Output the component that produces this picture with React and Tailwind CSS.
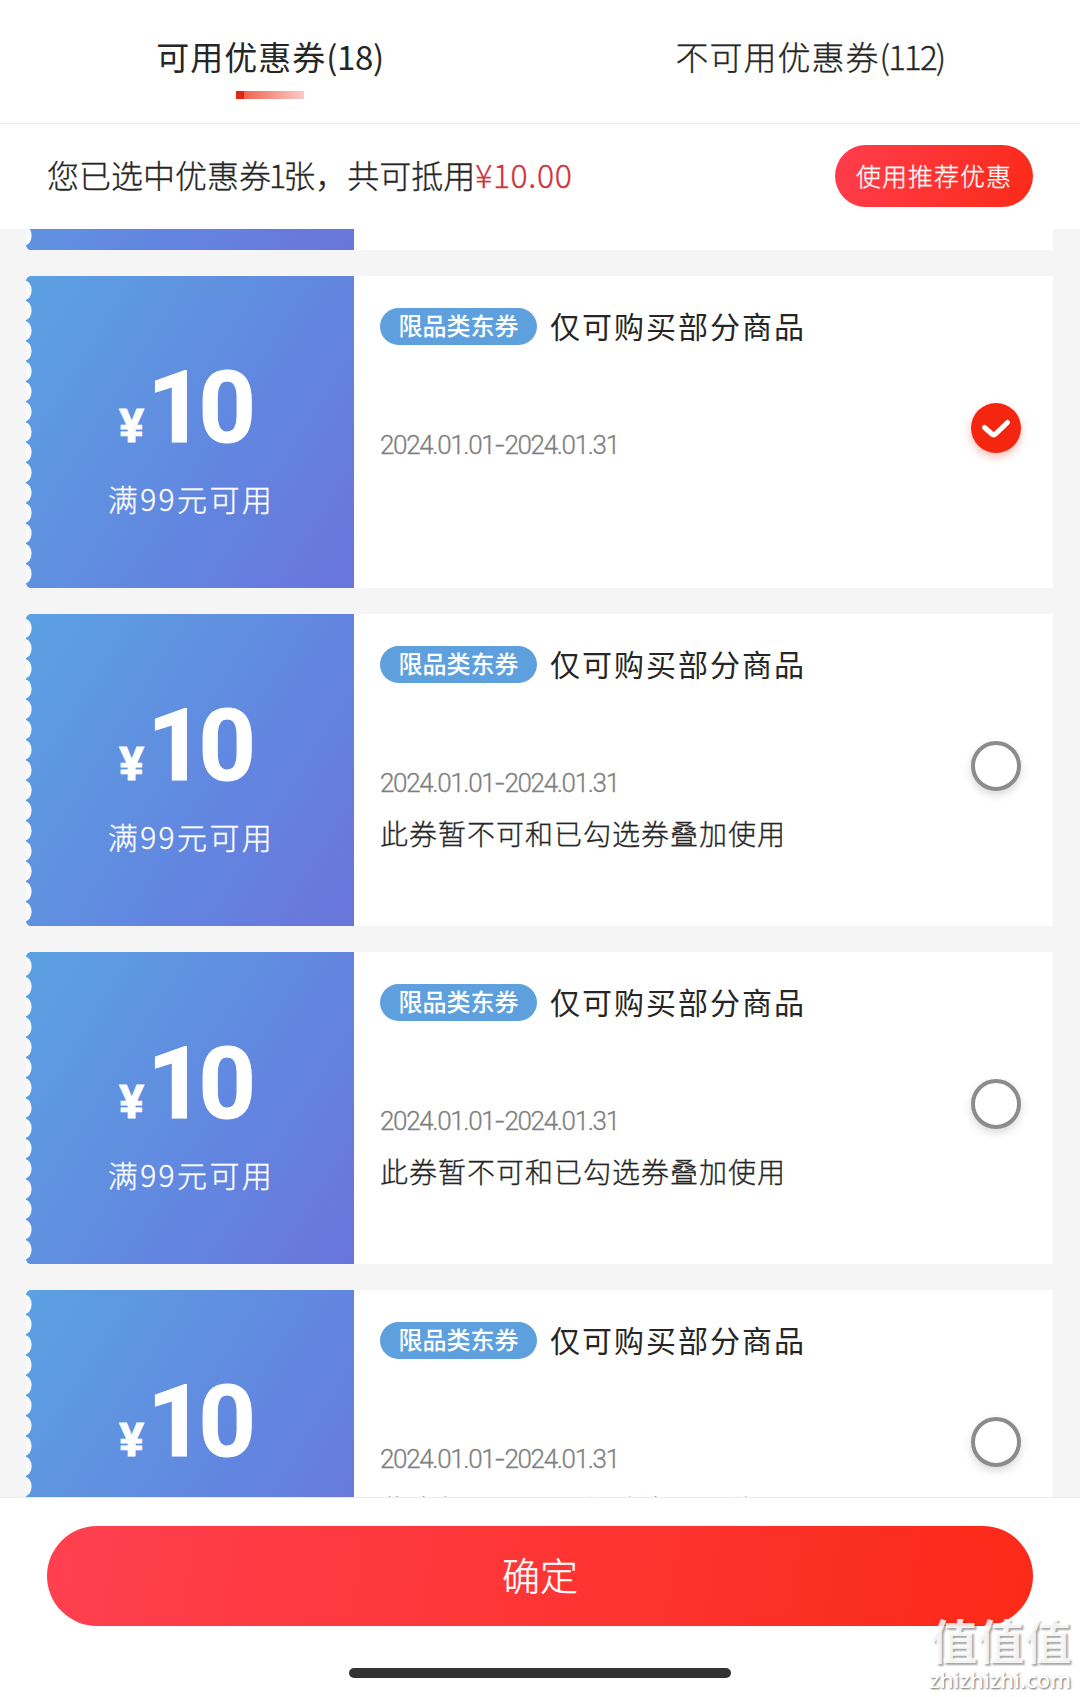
import React, { useState } from "react";

const coupons = [
  { id: 1, amount: 10, limit: "满99元可用", tag: "限品类东券", title: "仅可购买部分商品", date: "2024.01.01-2024.01.31", note: "" },
  { id: 2, amount: 10, limit: "满99元可用", tag: "限品类东券", title: "仅可购买部分商品", date: "2024.01.01-2024.01.31", note: "此券暂不可和已勾选券叠加使用" },
  { id: 3, amount: 10, limit: "满99元可用", tag: "限品类东券", title: "仅可购买部分商品", date: "2024.01.01-2024.01.31", note: "此券暂不可和已勾选券叠加使用" },
  { id: 4, amount: 10, limit: "满99元可用", tag: "限品类东券", title: "仅可购买部分商品", date: "2024.01.01-2024.01.31", note: "此券暂不可和已勾选券叠加使用" },
];

const notches = Array.from({ length: 15 }, (_, i) => 14.2 + i * 20.25);

// Perforated left edge of a coupon
function Perforation() {
  return (
    <svg className="absolute left-0 top-0" width="8" height="312" viewBox="0 0 8 312">
      <path d="M0 0H4Q1 1 0 4ZM0 312H4Q1 311 0 308Z" fill="#f5f5f5" />
      {notches.map((y) => (
        <ellipse key={y} cx="-1" cy={y} rx="6.6" ry="9.6" fill="#f8f9fb" />
      ))}
    </svg>
  );
}

function Stub({ children }) {
  return (
    <div className="relative flex h-[312px] w-[328px] shrink-0 flex-col items-center bg-linear-[122deg,#5ba1e2_0%,#6090e0_40%,#6285e0_62%,#6a75da_100%] text-white">
      <Perforation />
      {children}
    </div>
  );
}

function Radio({ checked, onClick }) {
  if (checked) {
    return (
      <button onClick={onClick} className="flex size-[50px] items-center justify-center rounded-full bg-[#f5260f] shadow-[0_4px_8px_rgba(245,38,15,0.3)]">
        <svg width="32" height="24" viewBox="0 0 32 24" fill="none">
          <path d="M4.5 11.5L12.5 18.5Q14 19.5 15.5 18L27.5 6.5" stroke="#fff" strokeWidth="5" strokeLinecap="round" strokeLinejoin="round" />
        </svg>
      </button>
    );
  }
  return (
    <button onClick={onClick} className="size-[50px] rounded-full border-4 border-[#8c8c8c] bg-white shadow-[0_4px_8px_rgba(0,0,0,0.15)]" />
  );
}

function Coupon({ item, checked, onSelect }) {
  const [from, to] = item.date.split("-");

  return (
    <div className="flex h-[312px] shrink-0 bg-white">
      <Stub>
        <div className="mt-[78px] flex h-[108px] items-baseline pr-[11px] font-[Roboto] font-bold">
          <span className="text-[47px] leading-[56px] [-webkit-text-stroke:0.8px]">¥</span>
          <span className="ml-[3px] text-[100px] leading-[108px] tracking-[-6px] [-webkit-text-stroke:1px]">{item.amount}</span>
        </div>
        <div className="mt-[14px] pl-[2px] text-[30px] leading-[44px] font-light tracking-[2.4px] [-webkit-text-stroke:0.3px]">{item.limit}</div>
      </Stub>
      <div className="flex flex-1 justify-between pl-[26px] pr-[32px]">
        <div className="flex flex-col">
          <div className="mt-[28px] flex h-[44px] items-center">
            <span className="flex h-[37px] w-[157px] items-center justify-center rounded-full bg-[#5ea0de] pb-[3px] text-[24px] leading-[34px] font-medium text-white">{item.tag}</span>
            <span className="ml-[13px] pb-[2px] text-[30px] leading-[42px] tracking-[2px] text-[#262626]">{item.title}</span>
          </div>
          <div className="mt-[81px] font-[Roboto] text-[26px] leading-[32px] font-light tracking-[-1.35px] text-[#808080] [-webkit-text-stroke:0.3px]">
            {from}
            <span className="mx-[2px] inline-block scale-x-130">-</span>
            {to}
          </div>
          {item.note && <div className="mt-[12px] text-[28px] leading-[44px] font-light tracking-[1px] text-[#262626] [-webkit-text-stroke:0.3px]">{item.note}</div>}
        </div>
        <div className="mt-[127px]">
          <Radio checked={checked} onClick={onSelect} />
        </div>
      </div>
    </div>
  );
}

export default function App() {
  const [selected, setSelected] = useState(1);

  return (
    <div className="relative flex h-[1697px] w-[1080px] flex-col overflow-hidden bg-[#f5f5f5] font-['Noto_Sans_CJK_SC',sans-serif] text-[#262626]">
      <div className="flex h-[124px] shrink-0 border-b border-[#ebebeb] bg-white text-[33px] leading-[48px]">
        <div className="flex flex-1 flex-col items-center pt-[32px]">
          <span className="tracking-[1px]">
            可用优惠券<span className="tracking-[-0.4px]">(18)</span>
          </span>
          <span className="mt-[11px] flex h-2 w-[68px]">
            <span className="w-2 bg-[#e2270f]" />
            <span className="flex-1 bg-linear-to-r from-[#ee6350] to-[#f9c9c6]" />
          </span>
        </div>
        <div className="flex flex-1 flex-col items-center pt-[32px]">
          <span className="font-light tracking-[1px] [-webkit-text-stroke:0.3px]">
            不可用优惠券<span className="tracking-[-1.8px]">(112)</span>
          </span>
        </div>
      </div>

      <div className="flex h-[105px] shrink-0 items-center justify-between bg-white pr-[47px] pb-[2px] pl-[47px]">
        <div className="pb-[4px] text-[32px] leading-[46px] font-light [-webkit-text-stroke:0.3px]">
          您已选中优惠券<span className="-ml-[2px] tracking-[-3px]">1</span>张，共可抵用
          <span className="tracking-[0.6px] text-[#d0333a]">¥10.00</span>
        </div>
        <button className="h-[62px] w-[198px] rounded-full bg-linear-[105deg,#ff3d4d,#fb2a18] text-[25px] font-light tracking-[1px] text-white [-webkit-text-stroke:0.3px]">
          使用推荐优惠
        </button>
      </div>

      <div className="flex flex-1 flex-col justify-start gap-[26px] overflow-hidden pr-[27px] pl-[26px]">
        {/* bottom of the coupon scrolled under the header */}
        <div className="flex h-[21px] shrink-0 items-end overflow-hidden bg-white">
          <Stub />
        </div>
        {coupons.map((item) => (
          <Coupon key={item.id} item={item} checked={selected === item.id} onSelect={() => setSelected(item.id)} />
        ))}
      </div>

      <div className="flex h-[200px] shrink-0 flex-col items-center border-t border-[#ebebeb] bg-white">
        <button className="mt-7 h-[100px] w-[986px] rounded-full bg-linear-[100deg,#ff4050,#fb2a18] pb-[5px] text-[38px] font-light text-white [-webkit-text-stroke:0.3px]">
          确定
        </button>
        <div className="mt-[42px] h-[10px] w-[382px] rounded-full bg-[#333]" />
      </div>

      <div className="absolute right-[9px] bottom-[5px] flex flex-col items-end text-white/80">
        <span className="text-[47px] leading-[54px] font-bold text-white/85 [text-shadow:2px_2px_2px_rgba(0,0,0,0.35)]">值值值</span>
        <span className="font-['Noto_Sans'] text-[22px] leading-[26px] font-medium text-white [text-shadow:1px_1px_2px_rgba(0,0,0,0.6)]">zhizhizhi.com</span>
      </div>
    </div>
  );
}
